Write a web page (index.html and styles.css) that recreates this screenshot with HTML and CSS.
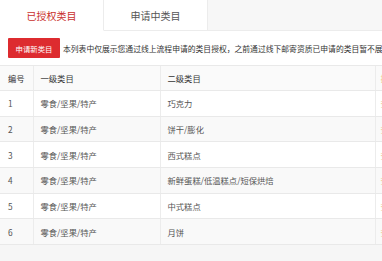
FILE: index.html
```html
<!DOCTYPE html>
<html lang="zh-CN">
<head>
<meta charset="utf-8">
<title>类目授权</title>
<link rel="stylesheet" href="styles.css">
</head>
<body>
<div class="page">
  <div class="tabs">
    <div class="tab active">已授权类目</div>
    <div class="tab">申请中类目</div>
    <div class="tab-rest"></div>
  </div>
  <div class="toolbar">
    <button class="btn">申请新类目</button>
    <span class="note">本列表中仅展示您通过线上流程申请的类目授权，之前通过线下邮寄资质已申请的类目暂不展示</span>
  </div>
  <table class="grid">
    <colgroup>
      <col class="c1"><col class="c2"><col class="c3"><col class="c4">
    </colgroup>
    <thead>
      <tr><th>编号</th><th>一级类目</th><th>二级类目</th><th class="op">操作</th></tr>
    </thead>
    <tbody>
      <tr><td>1</td><td>零食/坚果/特产</td><td>巧克力</td><td class="op">查看</td></tr>
      <tr><td>2</td><td>零食/坚果/特产</td><td>饼干/膨化</td><td class="op">查看</td></tr>
      <tr><td>3</td><td>零食/坚果/特产</td><td>西式糕点</td><td class="op">查看</td></tr>
      <tr><td>4</td><td>零食/坚果/特产</td><td>新鲜蛋糕/低温糕点/短保烘焙</td><td class="op">查看</td></tr>
      <tr><td>5</td><td>零食/坚果/特产</td><td>中式糕点</td><td class="op">查看</td></tr>
      <tr><td>6</td><td>零食/坚果/特产</td><td>月饼</td><td class="op">查看</td></tr>
    </tbody>
  </table>
  <div class="footer"></div>
</div>
</body>
</html>
```

FILE: styles.css
```css
html, body {
  margin: 0;
  padding: 0;
  background: #fff;
}
body {
  width: 382px;
  height: 261px;
  overflow: hidden;
  font-family: "Noto Sans CJK SC", "Noto Sans", sans-serif;
  color: #444;
}
.page {
  display: flex;
  flex-direction: column;
  height: 261px;
}
.tabs {
  display: flex;
  height: 31px;
  flex: none;
}
.tab {
  width: 103px;
  display: flex;
  align-items: center;
  justify-content: center;
  font-size: 10px;
  color: #555;
  background: #fff;
  border-bottom: 1px solid #ececec;
  box-sizing: border-box;
}
.tab.active {
  color: #c9302c;
  border-bottom-color: #fff;
  border-right: 1px solid #ececec;
  width: 104px;
}
.tab-rest {
  flex: 1;
  background: #f7f7f7;
  border-left: 1px solid #ececec;
  border-bottom: 1px solid #ececec;
}
.toolbar {
  display: flex;
  align-items: center;
  gap: 3px;
  height: 34px;
  padding: 0 0 0 8px;
  flex: none;
  white-space: nowrap;
  overflow: hidden;
}
.btn {
  flex: none;
  width: 52px;
  height: 20px;
  padding: 0;
  border: none;
  border-radius: 1px;
  background: #dd2b2f;
  color: #fff;
  font-family: inherit;
  font-size: 7.4px;
}
.note {
  font-size: 7.8px;
  color: #333;
}
.grid {
  border-collapse: collapse;
  table-layout: fixed;
  width: 400px;
  flex: none;
}
.c1 { width: 33px; }
.c2 { width: 127px; }
.c3 { width: 215px; }
.c4 { width: 25px; }
.grid th, .grid td {
  font-size: 8.3px;
  font-weight: normal;
  text-align: left;
  padding: 0 0 0 7px;
  border-top: 1px solid #e9e9e9;
  border-bottom: 1px solid #e9e9e9;
  border-left: 1px solid #ececec;
  white-space: nowrap;
  overflow: hidden;
}
.grid th:first-child, .grid td:first-child {
  border-left: none;
  padding-left: 8px;
}
.grid th {
  height: 24px;
  color: #333;
  background: #fafafa;
}
.grid td {
  height: 24.7px;
  color: #555;
}
.grid tbody tr:nth-child(even) td {
  background: #f9f9f9;
}
.grid .op {
  color: #f0c890;
  padding-left: 5px;
}
.footer {
  flex: 1;
  background: #f6f6f6;
}
```
